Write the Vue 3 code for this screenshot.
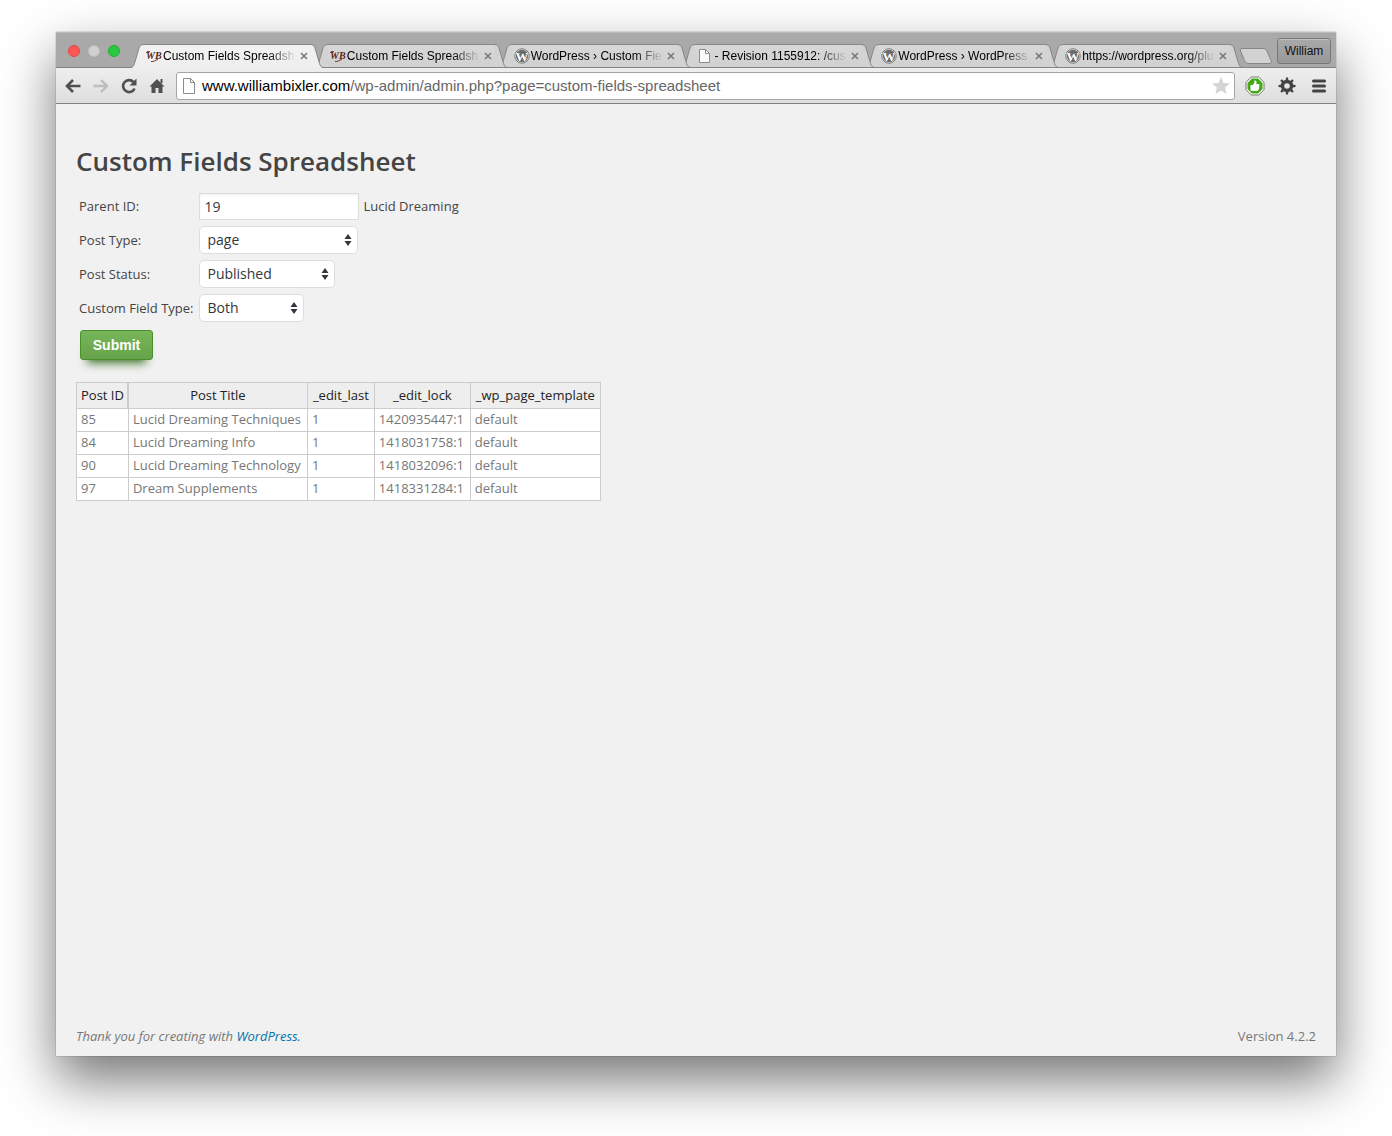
<template>
  <div class="desktop">
    <div class="window">
      <!-- Title bar with the tabs -->
      <header class="titlebar">
        <div class="lights">
          <button class="light red" aria-label="Close window" />
          <button class="light grey" aria-label="Minimize window" />
          <button class="light green" aria-label="Zoom window" />
        </div>

        <nav class="tabs">
          <div
            v-for="(tab, i) in tabs"
            :key="i"
            class="tab"
            :class="{ active: i === activeTab }"
            :style="{ zIndex: tabs.length - i }"
            @click="activeTab = i"
          >
            <svg class="slope" width="14" height="24" viewBox="0 0 14 24">
              <path class="fill" d="M0 24C3 24 3.500 22 4.500 19.500L9 4C10 1.500 11 .5 14 .5V24Z" />
              <path class="base" d="M2 23.500H14" />
              <path class="edge" d="M0 23.500C3 23.500 3.500 22 4.500 19.500L9 4C10 1.500 11 .5 14 .5" />
            </svg>
            <div class="tab-body">
              <svg v-if="tab.icon === 'wb'" class="favicon" width="16" height="16" viewBox="0 0 16 16">
                <text x="0" y="11" class="wb">WB</text>
                <path d="M0 5C1 3 3 3 4 4M5 13.500C8 14 9 12 12 11.500" fill="none" stroke="#7a3528" />
              </svg>
              <svg v-else-if="tab.icon === 'wp'" class="favicon" width="16" height="16" viewBox="0 0 16 16">
                <circle cx="8" cy="8" r="7.200" fill="#f4f4f4" stroke="#777" />
                <circle cx="8" cy="8" r="6.200" fill="#6b6b6b" />
                <text x="8" y="12.500" text-anchor="middle" class="wp">W</text>
              </svg>
              <svg v-else class="favicon" width="16" height="16" viewBox="0 0 16 16">
                <path d="M2.500 1.500H8.500L12.500 5.500V14.500H2.500Z" fill="#fafafa" stroke="#8c8c8c" />
                <path d="M8.500 1.500V5.500H12.500" fill="none" stroke="#8c8c8c" />
              </svg>
              <span class="tab-title">{{ tab.title }}</span>
              <button class="tab-close" aria-label="Close tab">
                <svg width="8" height="8" viewBox="0 0 8 8">
                  <path d="M1 1L7 7M7 1L1 7" stroke="#777" stroke-width="1.500" />
                </svg>
              </button>
            </div>
            <svg class="slope" width="14" height="24" viewBox="0 0 14 24">
              <path class="fill" d="M14 24C11 24 10.500 22 9.500 19.500L5 4C4 1.500 3 .5 0 .5V24Z" />
              <path class="base" d="M0 23.500H12" />
              <path class="edge" d="M14 23.500C11 23.500 10.500 22 9.500 19.500L5 4C4 1.500 3 .5 0 .5" />
            </svg>
          </div>
          <button class="new-tab" aria-label="New tab">
            <svg width="34" height="16" viewBox="0 0 34 16">
              <path
                d="M3 .5H24C26 .5 27 1 28 3L32 12.500C33 14.500 32 15.500 30 15.500H10C7.500 15.500 6.500 15 5.500 12.500L1.500 3C1 1.500 1.500 .5 3 .5Z"
                fill="#d2d2d2"
                stroke="#858585"
              />
            </svg>
          </button>
        </nav>

        <button class="profile">William</button>
      </header>

      <!-- Address bar -->
      <div class="toolbar">
        <button class="tool" aria-label="Back">
          <svg width="16" height="16" viewBox="0 0 16 16">
            <path d="M15.500 8H2M8 2L2 8L8 14" fill="none" stroke="#505050" stroke-width="2.600" />
          </svg>
        </button>
        <button class="tool" aria-label="Forward">
          <svg width="16" height="16" viewBox="0 0 16 16">
            <path d="M.5 8H14M8 2L14 8L8 14" fill="none" stroke="#bdbdbd" stroke-width="2.400" />
          </svg>
        </button>
        <button class="tool" aria-label="Reload">
          <svg width="16" height="16" viewBox="0 0 16 16">
            <path d="M12.500 4A6 6 0 1 0 13.600 10.500" fill="none" stroke="#505050" stroke-width="2.600" />
            <path d="M15.500 .5V7.500H8.500Z" fill="#505050" />
          </svg>
        </button>
        <button class="tool" aria-label="Home">
          <svg width="16" height="16" viewBox="0 0 16 16">
            <path d="M8 1L15.500 8.500H13.500V15H9.500V10H6.500V15H2.500V8.500H.5Z" fill="#505050" />
            <path d="M11.500 1H13.500V5H11.500Z" fill="#505050" />
          </svg>
        </button>

        <div class="omnibox">
          <svg width="14" height="16" viewBox="0 0 14 16">
            <path d="M1.500 .5H8.500L12.500 4.500V15.500H1.500Z" fill="#fff" stroke="#8c8c8c" />
            <path d="M8.500 .5V4.500H12.500" fill="none" stroke="#8c8c8c" />
          </svg>
          <span class="url"><b>www.williambixler.com</b>/wp-admin/admin.php?page=custom-fields-spreadsheet</span>
          <button class="star" aria-label="Bookmark this page">
            <svg width="18" height="17" viewBox="0 0 18 17">
              <path
                d="M9 0L11.500 5.900L18 6.400L13.100 10.600L14.600 17L9 13.600L3.400 17L4.900 10.600L0 6.400L6.500 5.900Z"
                fill="#d4d4d4"
              />
            </svg>
          </button>
        </div>

        <button class="tool" aria-label="Extension">
          <svg width="20" height="20" viewBox="0 0 20 20">
            <path d="M6.300 1H13.700L19 6.300V13.700L13.700 19H6.300L1 13.700V6.300Z" fill="#fff" stroke="#6d7a66" />
            <path d="M6.900 2.500H13.100L17.500 6.900V13.100L13.100 17.500H6.900L2.500 13.100V6.900Z" fill="#45a616" />
            <path
              d="M5.500 9H7.500C9 8 9.500 6.500 9.500 4.500C11.500 4 12 6 11.300 8H13.500C14.600 8 14.700 9.500 14.200 10C14.700 11 14.300 11.500 14 12C14.200 13 13.700 13.300 13.400 13.500C13.400 14.500 13 15 12 15H8L5.500 14.500Z"
              fill="#fff"
            />
          </svg>
        </button>
        <button class="tool" aria-label="Settings">
          <svg width="18" height="18" viewBox="0 0 18 18">
            <circle cx="9" cy="9" r="4.500" fill="none" stroke="#444" stroke-width="3.400" />
            <path
              v-for="n in 8"
              :key="n"
              d="M7.500 4L8 .5H10L10.500 4Z"
              fill="#444"
              :transform="`rotate(${n * 45} 9 9)`"
            />
          </svg>
        </button>
        <button class="tool" aria-label="Menu">
          <svg width="14" height="14" viewBox="0 0 14 14">
            <path d="M1.500 2H12.500M1.500 7H12.500M1.500 12H12.500" stroke="#444" stroke-width="3" stroke-linecap="round" />
          </svg>
        </button>
      </div>

      <!-- Page -->
      <main class="page">
        <h1>Custom Fields Spreadsheet</h1>

        <form @submit.prevent>
          <div class="fields">
            <label for="parent">Parent ID:</label>
            <div class="field">
              <input id="parent" v-model="parentId" type="text" />
              <span>Lucid Dreaming</span>
            </div>

            <template v-for="field in selects" :key="field.id">
              <label :for="field.id">{{ field.label }}</label>
              <div class="field">
                <div class="select" :class="field.id">
                  <select :id="field.id" v-model="field.value">
                    <option v-for="option in field.options" :key="option">{{ option }}</option>
                  </select>
                  <svg width="8" height="12" viewBox="0 0 8 12">
                    <path d="M4 0L7.500 5H.5ZM4 12L7.500 7H.5Z" fill="#32373c" />
                  </svg>
                </div>
              </div>
            </template>
          </div>
          <button class="submit" type="submit">Submit</button>
        </form>

        <table>
          <thead>
            <tr>
              <th v-for="column in columns" :key="column">{{ column }}</th>
            </tr>
          </thead>
          <tbody>
            <tr v-for="row in rows" :key="row[0]">
              <td v-for="(cell, i) in row" :key="i">{{ cell }}</td>
            </tr>
          </tbody>
        </table>

        <footer>
          <em>Thank you for creating with <a href="#">WordPress.</a></em>
          <span>Version 4.2.2</span>
        </footer>
      </main>
    </div>
  </div>
</template>

<script setup>
import { ref } from 'vue'

const activeTab = ref(0)
const tabs = [
  { icon: 'wb', title: 'Custom Fields Spreadsh' },
  { icon: 'wb', title: 'Custom Fields Spreadsh' },
  { icon: 'wp', title: 'WordPress › Custom Fiel' },
  { icon: 'file', title: '- Revision 1155912: /cus' },
  { icon: 'wp', title: 'WordPress › WordPress P' },
  { icon: 'wp', title: 'https://wordpress.org/plu' },
]

const parentId = ref('19')

const selects = ref([
  { id: 'post-type', label: 'Post Type:', value: 'page', options: ['page', 'post'] },
  { id: 'post-status', label: 'Post Status:', value: 'Published', options: ['Published', 'Draft'] },
  { id: 'field-type', label: 'Custom Field Type:', value: 'Both', options: ['Both', 'Public', 'Hidden'] },
])

const columns = ['Post ID', 'Post Title', '_edit_last', '_edit_lock', '_wp_page_template']
const rows = [
  ['85', 'Lucid Dreaming Techniques', '1', '1420935447:1', 'default'],
  ['84', 'Lucid Dreaming Info', '1', '1418031758:1', 'default'],
  ['90', 'Lucid Dreaming Technology', '1', '1418032096:1', 'default'],
  ['97', 'Dream Supplements', '1', '1418331284:1', 'default'],
]
</script>

<style>
body {
  margin: 0;
  background: #fff;
}
</style>

<style scoped>
* {
  box-sizing: border-box;
}

button {
  padding: 0;
  border: none;
  background: none;
}

svg {
  display: block;
  flex: none;
}

.desktop {
  display: flex;
  min-height: 100vh;
  padding: 32px 56px 80px;
  overflow: hidden;
}

.window {
  flex: 1;
  min-width: 0;
  display: flex;
  flex-direction: column;
  background: #f1f1f1;
  box-shadow:
    0 0 1px rgba(0, 0, 0, 0.5),
    0 24px 50px rgba(0, 0, 0, 0.54);
}

/* title bar */
.titlebar {
  display: flex;
  height: 36px;
  background: #a9a9a9;
  box-shadow: inset 0 1px #bcbcbc, inset 0 -1px #858585;
  font-family: 'Liberation Sans', Arial, sans-serif;
}

.lights {
  display: flex;
  flex: none;
  gap: 8px;
  width: 74px;
  padding: 13px 0 0 12px;
}

.light {
  width: 12px;
  height: 12px;
  border-radius: 50%;
}

.red {
  background: #fc5753;
  border: 1px solid #df4744;
}

.grey {
  background: #d0d0d0;
  border: 1px solid #bdbdbd;
}

.green {
  background: #28c940;
  border: 1px solid #1fae32;
}

.tabs {
  display: flex;
  flex: 1;
  min-width: 0;
  padding: 12px 4px 0 0;
}

.tab {
  position: relative;
  display: flex;
  flex: 0 1 194px;
  min-width: 0;
  margin-right: -10px;
}

.tab .fill {
  fill: #d3d3d3;
}

.tab .edge,
.tab .base {
  fill: none;
  stroke: #858585;
}

.tab.active .fill {
  fill: #f0f0f0;
}

.tab.active .base {
  stroke: #eee;
}

.tab-body {
  display: flex;
  flex: 1;
  align-items: center;
  min-width: 0;
  height: 24px;
  border-top: 1px solid #858585;
  border-bottom: 1px solid #858585;
  background: linear-gradient(#d8d8d8, #d0d0d0);
}

.active .tab-body {
  border-bottom-color: #eee;
  background: linear-gradient(#f2f2f2, #eee);
}

.favicon {
  margin-left: 2px;
}

.wb {
  font: italic bold 10px 'Liberation Serif', serif;
  fill: #5d1f16;
}

.wp {
  font: bold 13px 'Liberation Serif', serif;
  fill: #fff;
}

.tab-title {
  flex: 1;
  min-width: 0;
  overflow: hidden;
  white-space: nowrap;
  font-size: 12px;
  line-height: 16px;
  color: #000;
  padding-left: 1px;
  mask-image: linear-gradient(to left, transparent, #000 28px);
}

.tab-close {
  margin: 0 2px 0 4px;
}

.new-tab {
  flex: none;
  align-self: flex-start;
  margin: 4px 0 0 6px;
}

.profile {
  flex: none;
  width: 54px;
  height: 26px;
  margin: 6px 5px 0 0;
  border: 1px solid #777;
  border-radius: 3px;
  background: linear-gradient(#a9a9a9, #989898);
  box-shadow: inset 0 1px rgba(255, 255, 255, 0.3);
  font: 12px 'Liberation Sans', Arial, sans-serif;
  color: #111;
}

/* address bar */
.toolbar {
  display: flex;
  align-items: center;
  gap: 8px;
  height: 36px;
  padding: 0 5px 0 7px;
  border-bottom: 1px solid #808080;
  background: linear-gradient(#eee, #dedede);
}

.tool {
  display: flex;
  flex: none;
  align-items: center;
  justify-content: center;
  width: 20px;
  height: 20px;
}

.tool:nth-last-child(-n + 3) {
  width: 24px;
}

.omnibox {
  display: flex;
  flex: 1;
  align-items: center;
  gap: 6px;
  min-width: 0;
  height: 28px;
  margin-left: 1px;
  padding: 0 4px 0 5px;
  border: 1px solid #a5a5a5;
  border-radius: 3px;
  background: #fff;
  font-family: 'Liberation Sans', Arial, sans-serif;
}

.url {
  flex: 1;
  min-width: 0;
  overflow: hidden;
  white-space: nowrap;
  font-size: 15px;
  line-height: 20px;
  color: #666;
}

.url b {
  font-weight: normal;
  color: #000;
}

/* page */
.page {
  display: flex;
  flex: 1;
  flex-direction: column;
  align-items: flex-start;
  padding: 39px 20px 10px;
  font: 13px/20px 'Open Sans', sans-serif;
  color: #444;
}

h1 {
  margin: 0;
  font-size: 26px;
  line-height: 36px;
  font-weight: 600;
}

.fields {
  display: grid;
  grid-template-columns: auto 1fr;
  grid-auto-rows: 34px;
  align-items: center;
  column-gap: 6px;
  padding: 10px 0 0 3px;
}

.field {
  display: flex;
  align-items: center;
  gap: 4px;
}

input {
  width: 160px;
  height: 27px;
  padding: 0 4px;
  border: 1px solid #ddd;
  background: #fff;
  box-shadow: inset 0 1px 2px rgba(0, 0, 0, 0.07);
  font: 14px 'Open Sans', sans-serif;
  color: #32373c;
}

.select {
  display: grid;
  align-items: center;
}

.select select,
.select svg {
  grid-area: 1 / 1;
}

.select svg {
  justify-self: end;
  margin-right: 6px;
  pointer-events: none;
}

select {
  width: 100%;
  height: 28px;
  padding: 0 7px 2px;
  border: 1px solid #ddd;
  border-radius: 5px;
  appearance: none;
  background: #fff;
  font: 14px 'Open Sans', sans-serif;
  color: #32373c;
}

.post-type {
  width: 159px;
}

.post-status {
  width: 136px;
}

.field-type {
  width: 105px;
}

.submit {
  display: block;
  width: 73px;
  height: 30px;
  margin: 5px 0 22px 4px;
  border: 1px solid #4b8f29;
  border-radius: 3px;
  background: linear-gradient(#77b55a, #67a34a);
  box-shadow: 0 10px 10px -7px #3e7327;
  font: bold 14px 'Liberation Sans', Arial, sans-serif;
  color: #fff;
}

table {
  border-collapse: collapse;
  color: #777;
}

th,
td {
  height: 23px;
  padding: 0 4px 2px;
  border: 1px solid #ccc;
  background: #fff;
  text-align: left;
  line-height: 20px;
}

th {
  height: 26px;
  background: #eee;
  font-weight: normal;
  text-align: center;
  color: #222;
}

th:first-child {
  box-shadow: inset -1px 0 #ccc;
}

th:nth-child(2) {
  min-width: 179px;
}

th:nth-child(n + 3) {
  padding: 0 5px 2px;
}

th:nth-child(4) {
  min-width: 96px;
}

footer {
  display: flex;
  justify-content: space-between;
  align-self: stretch;
  margin-top: auto;
  color: #777;
}

footer a {
  color: #0073aa;
  text-decoration: none;
}
</style>
